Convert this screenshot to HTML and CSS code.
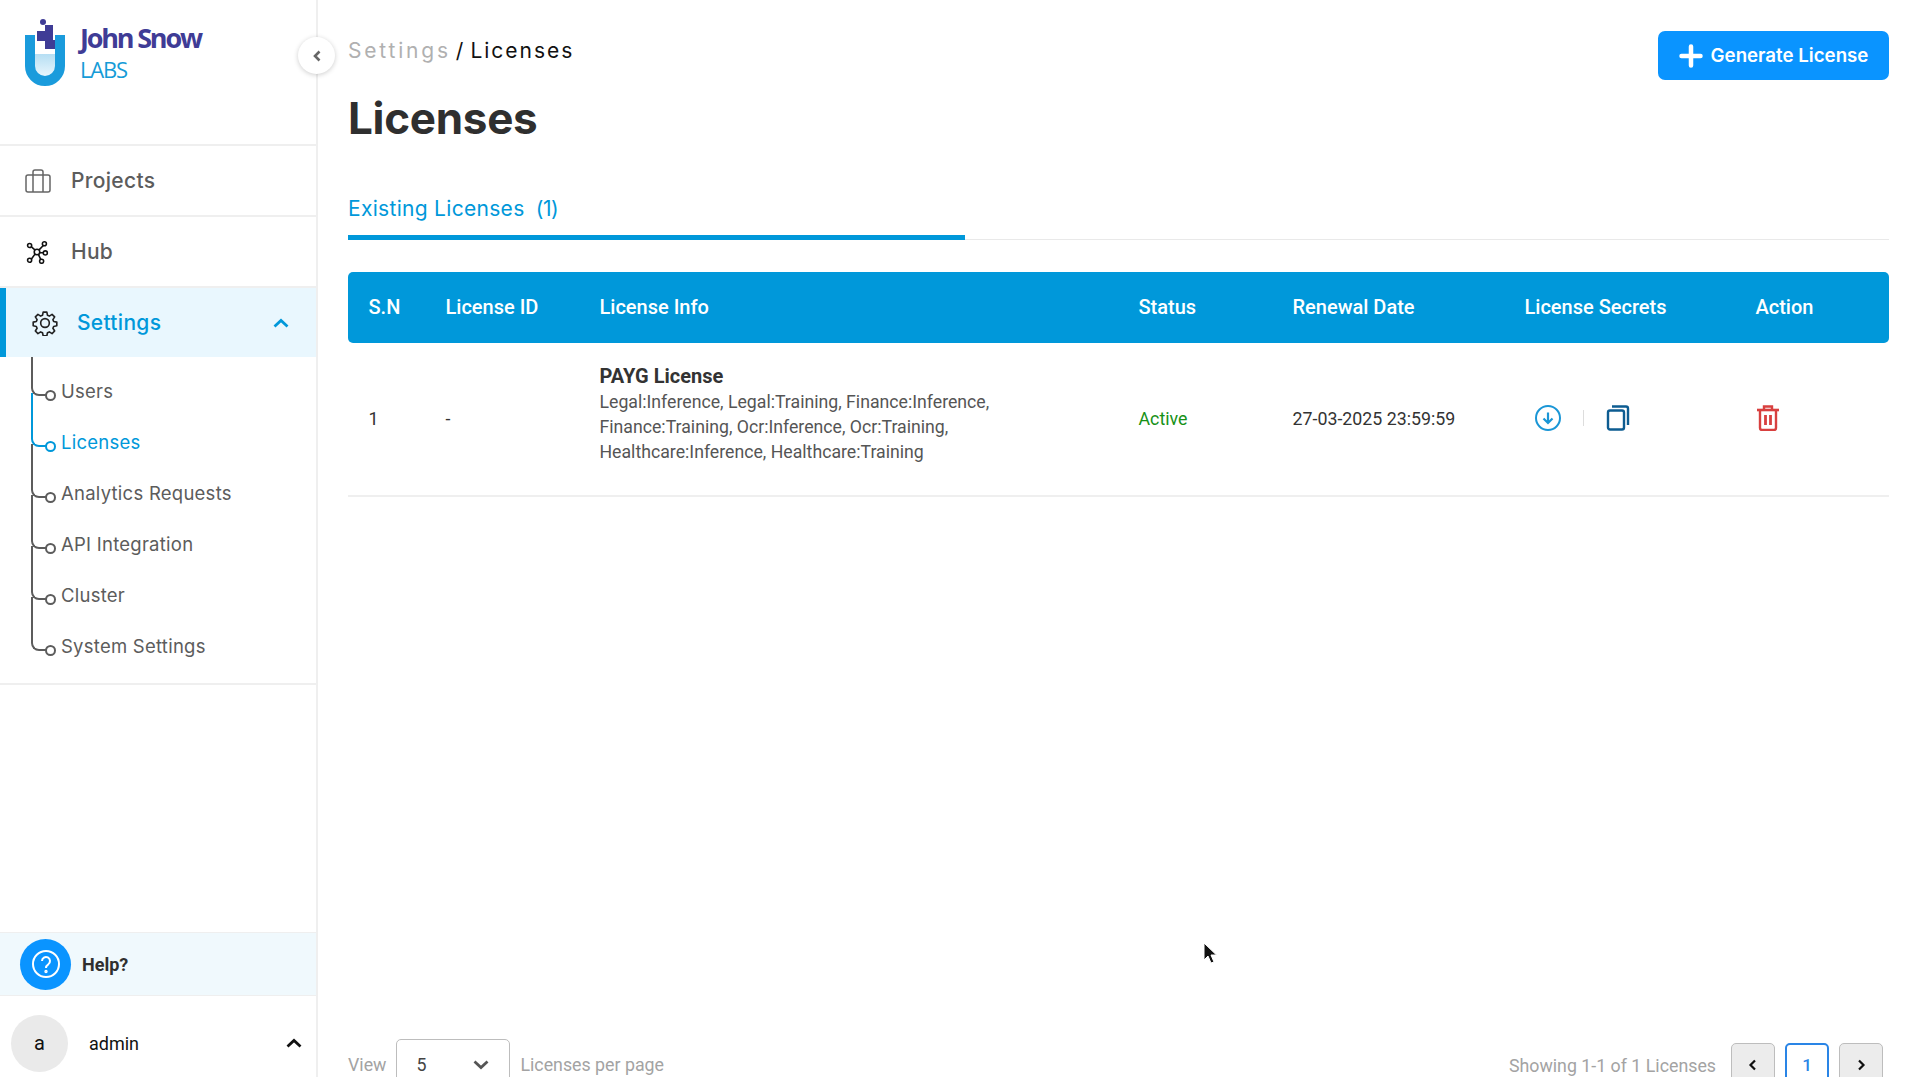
FILE: index.html
```html
<!DOCTYPE html>
<html lang="en">
<head>
    <meta charset="UTF-8">
    <meta name="viewport" content="width=device-width, initial-scale=1.0">
    <title>Licenses</title>
    <link rel="stylesheet" href="styles.css">
</head>
<body>
    <div class="shell">
        <aside class="sidebar">
            <div class="logo">
                <svg class="logo-mark" width="42" height="70" viewBox="0 0 42 70">
                    <defs>
                        <linearGradient id="tube" x1="0" y1="0" x2="0" y2="1">
                            <stop offset="0" stop-color="#b5def3"/>
                            <stop offset="1" stop-color="#f2fafe"/>
                        </linearGradient>
                    </defs>
                    <rect x="11" y="36" width="20" height="26" fill="url(#tube)"/>
                    <path d="M6 17V48a15 15 0 0 0 30 0V17" fill="none" stroke="#1a9bdc" stroke-width="10"/>
                    <circle cx="19" cy="4" r="3" fill="#3f3c96"/>
                    <path d="M21 7h8v15h2v9H21v-8h-8V13h8z" fill="#3f3c96"/>
                </svg>
                <div class="logo-text">
                    <span class="logo-name">John Snow</span>
                    <span class="logo-labs">LABS</span>
                </div>
            </div>
            <button class="collapse-btn" aria-label="Collapse">
                <svg width="12" height="14" viewBox="0 0 12 14"><path d="M8.500 2.500 4 7l4.500 4.500" fill="none" stroke="#666" stroke-width="2.600"/></svg>
            </button>

            <nav class="nav">
                <a class="nav-item">
                    <svg class="nav-icon" width="26" height="24" viewBox="0 0 26 24" fill="none" stroke="#666" stroke-width="1.500">
                        <rect x="1" y="6" width="24" height="17" rx="2"/>
                        <path d="M8 6V3a2 2 0 0 1 2-2h6a2 2 0 0 1 2 2v3M8 6v17M18 6v17"/>
                    </svg>
                    Projects
                </a>
                <a class="nav-item">
                    <svg class="nav-icon hub" width="24" height="24" viewBox="0 0 26 26" fill="none" stroke="#111" stroke-width="1.700">
                        <circle cx="13" cy="13" r="3"/>
                        <circle cx="5" cy="6" r="2.200"/>
                        <circle cx="21" cy="4" r="2.200"/>
                        <circle cx="22" cy="14" r="2.200"/>
                        <circle cx="5" cy="22" r="2.200"/>
                        <circle cx="18" cy="23" r="2.200"/>
                        <path d="m7 7.500 4 3.500M19.800 6 15 11M19.800 13.800H16M7 20.500l4-5.500M17 21l-2.500-5.500"/>
                    </svg>
                    Hub
                </a>
                <a class="nav-item nav-item-active">
                    <svg class="nav-icon gear" width="26" height="26" viewBox="0 0 24 24" fill="none" stroke="#222" stroke-width="1.500">
                        <circle cx="12" cy="12" r="4"/>
                        <path d="M10.300 2h3.400l.6 2.900 1.700.7 2.500-1.600 2.400 2.400-1.600 2.500.7 1.700 2.900.6v3.400l-2.900.6-.7 1.700 1.600 2.500-2.400 2.400-2.500-1.600-1.700.7-.6 2.900h-3.400l-.6-2.900-1.700-.7-2.500 1.600-2.400-2.400 1.600-2.500-.7-1.700-2.900-.6v-3.400l2.900-.6.7-1.700-1.600-2.500 2.400-2.400 2.500 1.600 1.700-.7z" stroke-linejoin="round"/>
                    </svg>
                    Settings
                    <svg class="nav-caret" width="18" height="12" viewBox="0 0 18 12"><path d="m2.500 9.500 6.500-6 6.500 6" fill="none" stroke="#0098da" stroke-width="2.800"/></svg>
                </a>
                <ul class="subnav">
                    <li>Users</li>
                    <li class="active">Licenses</li>
                    <li>Analytics Requests</li>
                    <li>API Integration</li>
                    <li>Cluster</li>
                    <li>System Settings</li>
                </ul>
            </nav>

            <div class="sidebar-bottom">
                <div class="help">
                    <span class="help-icon">
                        <svg width="30" height="30" viewBox="0 0 30 30" fill="none" stroke="#fff" stroke-width="2">
                            <circle cx="15" cy="15" r="13"/>
                            <path d="M11 12a4 4 0 1 1 6.300 3.300c-1.500 1-2.300 1.700-2.300 3.700"/>
                            <circle cx="15" cy="22.500" r=".7"/>
                        </svg>
                    </span>
                    Help?
                </div>
                <div class="user">
                    <span class="avatar">a</span>
                    <span class="user-name">admin</span>
                    <svg width="16" height="10" viewBox="0 0 16 10"><path d="m1.500 8.500 6.500-6 6.500 6" fill="none" stroke="#111" stroke-width="2.800"/></svg>
                </div>
            </div>
        </aside>

        <main class="main">
            <div class="page-head">
                <div>
                    <div class="breadcrumb"><span class="crumb-parent">Settings</span><span class="crumb-sep">/</span>Licenses</div>
                    <h1>Licenses</h1>
                </div>
                <button class="btn-primary">
                    <svg width="24" height="24" viewBox="0 0 24 24"><path d="M12 2.500v19M2.500 12h19" stroke="#fff" stroke-width="4.500" stroke-linecap="round"/></svg>
                    Generate License
                </button>
            </div>

            <div class="tabs">
                <div class="tab active">Existing Licenses <span class="tab-count">(1)</span></div>
            </div>

            <table class="license-table">
                <colgroup>
                    <col class="col-sn"><col class="col-id"><col class="col-info"><col class="col-status"><col class="col-date"><col class="col-secrets"><col>
                </colgroup>
                <thead>
                    <tr>
                        <th>S.N</th>
                        <th>License ID</th>
                        <th>License Info</th>
                        <th>Status</th>
                        <th>Renewal Date</th>
                        <th>License Secrets</th>
                        <th>Action</th>
                    </tr>
                </thead>
                <tbody>
                    <tr>
                        <td>1</td>
                        <td>-</td>
                        <td class="info-cell">
                            <div class="license-name">PAYG License</div>
                            <div class="license-scopes">Legal:Inference, Legal:Training, Finance:Inference,<br>Finance:Training, Ocr:Inference, Ocr:Training,<br>Healthcare:Inference, Healthcare:Training</div>
                        </td>
                        <td class="status-active">Active</td>
                        <td>27-03-2025 23:59:59</td>
                        <td>
                            <div class="secret-actions">
                                <svg width="26" height="26" viewBox="0 0 26 26" fill="none" stroke="#1a96d6" stroke-width="2">
                                    <circle cx="13" cy="13" r="12"/>
                                    <path d="M13 7.500v10M8.500 13.500l4.500 4.500 4.500-4.500" stroke-width="2.200"/>
                                </svg>
                                <span class="divider"></span>
                                <svg width="24" height="26" viewBox="0 0 24 26" fill="none" stroke="#0d5c91" stroke-width="2.400">
                                    <rect x="2" y="5.500" width="16" height="19" rx="2"/>
                                    <path d="M6 1.500h14a2 2 0 0 1 2 2V20"/>
                                </svg>
                            </div>
                        </td>
                        <td>
                            <svg class="trash" width="22" height="26" viewBox="0 0 22 26" fill="none" stroke="#d8403f" stroke-width="2.400">
                                <path d="M0 5h22" stroke-width="2.600"/>
                                <path d="M7 4V1.500h8V4"/>
                                <path d="M3 6v17a2 2 0 0 0 2 2h12a2 2 0 0 0 2-2V6"/>
                                <path d="M8.500 10v10M13.500 10v10" stroke-width="2.800"/>
                            </svg>
                        </td>
                    </tr>
                </tbody>
            </table>

            <div class="table-footer">
                <div class="per-page">
                    View
                    <div class="select-box">
                        5
                        <svg width="18" height="12" viewBox="0 0 18 12"><path d="m2.500 2.500 6.500 6 6.500-6" fill="none" stroke="#555" stroke-width="2.800"/></svg>
                    </div>
                    Licenses per page
                </div>
                <div class="pagination">
                    <span class="page-info">Showing 1-1 of 1 Licenses</span>
                    <button class="page-btn">
                        <svg width="10" height="12" viewBox="0 0 10 12"><path d="M7 1.500 2.500 6 7 10.500" fill="none" stroke="#111" stroke-width="2.200"/></svg>
                    </button>
                    <button class="page-btn current">1</button>
                    <button class="page-btn">
                        <svg width="10" height="12" viewBox="0 0 10 12"><path d="M3 1.500 7.500 6 3 10.500" fill="none" stroke="#111" stroke-width="2.200"/></svg>
                    </button>
                </div>
            </div>
        </main>

        <svg class="mouse-cursor" width="14" height="24" viewBox="0 0 14 24"><path d="M1 1v17l4-4 3 7 3-1-3-7h5.500z" fill="#111" stroke="#fff" stroke-width="1"/></svg>
    </div>
</body>
</html>
```

FILE: styles.css
```css
:root {
    --blue: #0098da;
    --blue-bright: #0a94ff;
    --line: #efefef;
    --text: #2f2f2f;
    --text-nav: #5c5c5c;
    --text-muted: #a3a3a3;
}

* {
    margin: 0;
    padding: 0;
    box-sizing: border-box;
}

html, body {
    height: 100%;
    overflow: hidden;
}

body {
    background-color: #fff;
    color: var(--text);
    font-family: Roboto, "Liberation Sans", sans-serif;
}

button {
    font: inherit;
    border: none;
    background: none;
}

.shell {
    position: relative;
    display: flex;
    height: 100vh;
    overflow: hidden;
}

/* sidebar */
.sidebar {
    position: relative;
    flex: 0 0 318px;
    display: flex;
    flex-direction: column;
    border-right: 2px solid var(--line);
}

.logo {
    display: flex;
    gap: 14px;
    height: 144px;
    padding: 18px 0 0 24px;
}

.logo-text {
    display: flex;
    flex-direction: column;
    padding-top: 2px;
    font-family: "Open Sans", sans-serif;
}

.logo-name {
    color: #3f3c96;
    font-size: 27px;
    line-height: 36px;
    font-weight: 700;
    letter-spacing: -2.200px;
}

.logo-labs {
    color: #159bd7;
    font-size: 22px;
    line-height: 26px;
    font-weight: 400;
    letter-spacing: -1.200px;
}

.collapse-btn {
    position: absolute;
    top: 37px;
    left: 298px;
    width: 37px;
    height: 37px;
    display: flex;
    align-items: center;
    justify-content: center;
    border-radius: 50%;
    background-color: #fff;
    box-shadow: 0 1px 5px rgba(0, 0, 0, 0.2);
}

.nav {
    border-top: 2px solid var(--line);
}

.nav-item {
    display: flex;
    align-items: center;
    height: 71px;
    padding-left: 25px;
    border-bottom: 2px solid var(--line);
    color: var(--text-nav);
    font-family: Inter, sans-serif;
    font-size: 21px;
    font-weight: 500;
    letter-spacing: 0.3px;
}

.nav-icon {
    flex: none;
    margin-right: 20px;
}

.hub {
    margin-right: 22px;
}

.nav-item-active {
    height: 69px;
    padding-left: 26px;
    border-left: 6px solid var(--blue);
    border-bottom: none;
    background-color: #e9f7fe;
    color: var(--blue);
}

.gear {
    margin-right: 19px;
}

.nav-caret {
    margin-left: auto;
    margin-right: 26px;
}

.subnav {
    list-style: none;
    padding: 9px 0 11px;
    border-bottom: 2px solid var(--line);
}

.subnav li {
    position: relative;
    height: 51px;
    padding: 13px 0 0 61px;
    color: var(--text-nav);
    font-family: Inter, sans-serif;
    font-size: 18.500px;
    line-height: 25px;
    letter-spacing: 0.25px;
}

/* tree line and its curve into the dot */
.subnav li::before {
    content: "";
    position: absolute;
    left: 31px;
    top: -24px;
    width: 15px;
    height: 52px;
    border-left: 2px solid #5c5c5c;
    border-bottom: 2px solid #5c5c5c;
    border-bottom-left-radius: 8px;
}

.subnav li:first-child::before {
    top: -9px;
    height: 37px;
}

.subnav li::after {
    content: "";
    position: absolute;
    left: 45px;
    top: 24px;
    width: 7px;
    height: 7px;
    border: 2px solid #5c5c5c;
    border-radius: 50%;
    background-color: #fff;
}

.subnav li.active {
    color: var(--blue);
}

.subnav li.active::before,
.subnav li.active::after {
    border-color: var(--blue);
    z-index: 1;
}

.sidebar-bottom {
    margin-top: auto;
}

.help {
    display: flex;
    align-items: center;
    gap: 11px;
    height: 64px;
    padding-left: 20px;
    border-top: 1px solid var(--line);
    border-bottom: 1px solid var(--line);
    background-color: #f0f9fd;
    font-size: 18px;
    font-weight: 700;
}

.help-icon {
    width: 51px;
    height: 51px;
    display: flex;
    align-items: center;
    justify-content: center;
    border-radius: 50%;
    background-color: var(--blue-bright);
}

.user {
    display: flex;
    align-items: center;
    height: 81px;
    padding: 13px 14px 0 11px;
    color: #111;
    font-size: 18px;
}

.avatar {
    width: 57px;
    height: 57px;
    display: flex;
    align-items: center;
    justify-content: center;
    border-radius: 50%;
    background-color: #eaeaea;
    font-size: 20px;
}

.user-name {
    flex: 1;
    margin-left: 21px;
}

/* main */
.main {
    flex: 1;
    min-width: 0;
    height: 1100px;
    display: flex;
    flex-direction: column;
    padding: 0 31px 0 30px;
}

.page-head {
    display: flex;
    justify-content: space-between;
    align-items: flex-start;
    height: 184px;
}

.breadcrumb {
    margin-top: 38px;
    font-family: Inter, sans-serif;
    font-size: 21px;
    line-height: 26px;
    letter-spacing: 2px;
    color: #111;
}

.crumb-parent {
    color: #b0b0b0;
    letter-spacing: 2.800px;
}

.crumb-sep {
    margin: 0 5px 0 5px;
}

h1 {
    margin-top: 24px;
    font-family: Inter, sans-serif;
    font-size: 44px;
    line-height: 60px;
    font-weight: 700;
    color: #2f2f2f;
    letter-spacing: -0.3px;
}

.btn-primary {
    display: flex;
    align-items: center;
    justify-content: center;
    gap: 8px;
    width: 231px;
    height: 49px;
    margin-top: 31px;
    border-radius: 7px;
    background-color: var(--blue-bright);
    color: #fff;
    font-family: Inter, sans-serif;
    font-size: 18.700px;
    font-weight: 600;
}

.tabs {
    height: 56px;
    border-bottom: 1px solid #e9e9e9;
}

.tab {
    width: 617px;
    height: 56px;
    padding-top: 10px;
    border-bottom: 5px solid var(--blue);
    color: var(--blue);
    font-family: Inter, sans-serif;
    font-size: 21px;
    line-height: 30px;
    letter-spacing: 0.3px;
}

.tab-count {
    margin-left: 5px;
    letter-spacing: -0.5px;
}

.license-table {
    width: 100%;
    margin-top: 32px;
    border-collapse: separate;
    border-spacing: 0;
    table-layout: fixed;
}

.col-sn { width: 77px; }
.col-id { width: 154px; }
.col-info { width: 539px; }
.col-status { width: 154px; }
.col-date { width: 232px; }
.col-secrets { width: 231px; }

.license-table th {
    height: 71px;
    padding: 0 0 2px 20.500px;
    background-color: var(--blue);
    color: #fff;
    font-size: 20px;
    font-weight: 500;
    text-align: left;
}

.license-table th:first-child {
    border-radius: 5px 0 0 5px;
}

.license-table th:last-child {
    border-radius: 0 5px 5px 0;
}

.license-table td {
    height: 154px;
    padding: 0 0 2px 20.500px;
    border-bottom: 2px solid var(--line);
    font-size: 17.800px;
    color: #333;
}

.license-table .info-cell {
    padding-bottom: 11px;
}

.license-name {
    font-size: 20px;
    line-height: 27px;
    font-weight: 700;
}

.license-scopes {
    font-size: 17.700px;
    line-height: 25px;
    color: #555;
}

.license-table .status-active {
    color: #169116;
}

.secret-actions {
    display: flex;
    align-items: center;
    padding-left: 10px;
}

.secret-actions .divider {
    width: 1px;
    height: 16px;
    margin: 0 22px;
    background-color: #ddd;
}

.trash {
    display: block;
    margin-left: 1px;
}

.table-footer {
    display: flex;
    justify-content: space-between;
    align-items: flex-start;
    margin-top: auto;
    height: 61px;
    color: var(--text-muted);
    font-size: 17.800px;
}

.per-page {
    display: flex;
    align-items: flex-start;
    gap: 10px;
    line-height: 52px;
}

.select-box {
    display: flex;
    align-items: center;
    justify-content: space-between;
    width: 114px;
    height: 52px;
    padding: 0 19px;
    border: 1px solid #bdbdbd;
    border-radius: 5px;
    color: #444;
}

.pagination {
    display: flex;
    align-items: center;
    gap: 10px;
    padding: 4px 6px 0 0;
}

.page-info {
    margin-right: 5px;
}

.page-btn {
    width: 44px;
    height: 44px;
    display: flex;
    align-items: center;
    justify-content: center;
    border: 1px solid #bdbdbd;
    border-radius: 5px;
    background-color: #ececec;
}

.page-btn.current {
    border: 2px solid #2a85e6;
    background-color: #fff;
    color: #2a85e6;
    font-size: 17px;
    font-weight: 500;
}

.mouse-cursor {
    position: absolute;
    left: 1203px;
    top: 942px;
}
```
